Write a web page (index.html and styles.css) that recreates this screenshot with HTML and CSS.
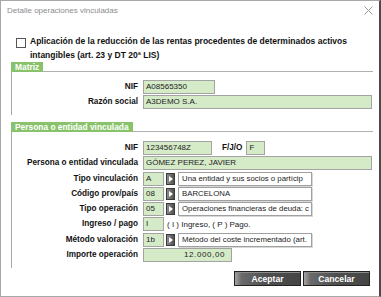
FILE: index.html
```
<!DOCTYPE html>
<html lang="es">
<head>
    <meta charset="UTF-8">
    <title>Detalle operaciones vinculadas</title>
    <link rel="stylesheet" href="styles.css">
</head>
<body>
    <div class="dialog">
        <div class="titlebar">
            <span class="title">Detalle operaciones vinculadas</span>
            <svg class="close" width="9" height="9" viewBox="0 0 9 9"><path d="M0.5 0.5 L8.5 8.5 M8.5 0.5 L0.5 8.5" stroke="#9a9a9a" stroke-width="1" fill="none"/></svg>
        </div>

        <div class="check">
            <span class="box"></span>
            <span class="check-text">Aplicación de la reducción de las rentas procedentes de determinados activos<br>intangibles (art. 23 y DT 20ª LIS)</span>
        </div>

        <div class="group">
            <div class="group-head"><span class="tab">Matriz</span><span class="rule"></span></div>
            <div class="group-body form">
                <span class="lbl">NIF</span>
                <div class="cell"><span class="field w-nif">A08565350</span></div>
                <span class="lbl">Razón social</span>
                <div class="cell"><span class="field w-full">A3DEMO S.A.</span></div>
            </div>
        </div>

        <div class="group second">
            <div class="group-head"><span class="tab">Persona o entidad vinculada</span><span class="rule"></span></div>
            <div class="group-body form">
                <span class="lbl">NIF</span>
                <div class="cell">
                    <span class="field w-nif2">123456748Z</span>
                    <span class="lbl inline">F/J/O</span>
                    <span class="field w-fjo">F</span>
                </div>
                <span class="lbl">Persona o entidad vinculada</span>
                <div class="cell"><span class="field w-full">GÓMEZ PEREZ, JAVIER</span></div>
                <span class="lbl">Tipo vinculación</span>
                <div class="cell"><span class="field w-code">A</span><span class="pick"></span><span class="desc">Una entidad y sus socios o partícip</span></div>
                <span class="lbl">Código prov/país</span>
                <div class="cell"><span class="field w-code">08</span><span class="pick"></span><span class="desc">BARCELONA</span></div>
                <span class="lbl">Tipo operación</span>
                <div class="cell"><span class="field w-code">05</span><span class="pick"></span><span class="desc">Operaciones financieras de deuda: c</span></div>
                <span class="lbl">Ingreso / pago</span>
                <div class="cell"><span class="field w-code">I</span><span class="hint">( I ) Ingreso, ( P ) Pago.</span></div>
                <span class="lbl">Método valoración</span>
                <div class="cell"><span class="field w-code">1b</span><span class="pick"></span><span class="desc">Método del coste incrementado (art.</span></div>
                <span class="lbl">Importe operación</span>
                <div class="cell"><span class="field w-amount">12.000,00</span></div>
            </div>
        </div>

        <div class="actions">
            <button class="btn">Aceptar</button>
            <button class="btn">Cancelar</button>
        </div>
    </div>
</body>
</html>
```

FILE: styles.css
```
body {
    margin: 0;
    font-family: "Liberation Sans", Arial, sans-serif;
    background: #fff;
}

.dialog {
    width: 381px;
    height: 297px;
    box-sizing: border-box;
    border: 1px solid #a8a8a8;
    border-right: 2px solid #4a4a4a;
    background: #fff;
}

.titlebar {
    height: 19px;
    display: flex;
    align-items: center;
    justify-content: space-between;
    padding: 0 6px 0 6px;
}

.title {
    font-size: 8px;
    color: #8c8c8c;
    margin-top: -1px;
}

.close {
    margin-top: -1px;
}

.check {
    display: flex;
    align-items: flex-start;
    margin: 14px 0 0 15px;
    height: 28px;
}

.box {
    width: 8px;
    height: 8px;
    border: 1px solid #555;
    background: #fff;
    margin-top: 4px;
    flex: none;
}

.check-text {
    margin-left: 4px;
    font-size: 8.5px;
    font-weight: bold;
    line-height: 14px;
    color: #111;
}

.group {
    margin-left: 10px;
    width: 362px;
}

.group.second {
    margin-top: 7px;
}

.group-head {
    display: flex;
    height: 10px;
}

.tab {
    background: #88c36b;
    color: #fff;
    font-size: 8.4px;
    font-weight: bold;
    line-height: 10px;
    padding: 0 4px;
}

.rule {
    flex: 1;
    border-bottom: 1px solid #b0b0b0;
}

.group-body {
    border-left: 1px solid #a8a8a8;
    padding: 8px 0 6px 0;
}

.second .group-body {
    padding: 9px 0 6px 0;
}

.form {
    display: grid;
    grid-template-columns: 126px 1fr;
    column-gap: 5px;
    row-gap: 1px;
    grid-auto-rows: 14px;
}

.second .form {
    row-gap: 1.3px;
}

.lbl {
    font-size: 8.2px;
    font-weight: bold;
    color: #111;
    text-align: right;
    line-height: 14px;
}

.lbl.inline {
    margin: 0 4px 0 10px;
}

.cell {
    display: flex;
    align-items: center;
}

.field {
    height: 14px;
    box-sizing: border-box;
    background: #d5ebc8;
    border: 1px solid #a3a3a3;
    font-size: 8px;
    line-height: 12px;
    padding: 0 2px;
    color: #222;
    white-space: nowrap;
    overflow: hidden;
}

.w-nif { width: 72px; }
.w-nif2 { width: 69px; }
.w-fjo { width: 19px; }
.w-full { width: 229px; }
.w-code { width: 21px; }

.w-amount {
    width: 89px;
    text-align: right;
    padding-right: 6px;
    letter-spacing: 0.6px;
}

.pick {
    width: 9px;
    height: 12px;
    margin: 0 3px 0 2px;
    background: linear-gradient(to right, #8a8a8a, #505050);
    border: 1px solid #3a3a3a;
    box-sizing: border-box;
    position: relative;
}

.pick::after {
    content: "";
    position: absolute;
    left: 2px;
    top: 2px;
    border-left: 4px solid #fff;
    border-top: 3px solid transparent;
    border-bottom: 3px solid transparent;
}

.desc {
    width: 134px;
    height: 14px;
    box-sizing: border-box;
    border: 1px solid #a0a0a0;
    box-shadow: 1px 1px 0 #d8d8d8;
    background: #fff;
    font-size: 7.8px;
    line-height: 12px;
    padding: 0 2px 0 3px;
    color: #222;
    white-space: nowrap;
    overflow: hidden;
}

.hint {
    font-size: 8px;
    color: #222;
    margin-left: 3px;
}

.actions {
    display: flex;
    justify-content: flex-end;
    gap: 2px;
    margin: 3px 9px 0 0;
}

.btn {
    width: 67px;
    height: 15px;
    padding: 0;
    border: 1px solid #222;
    background: linear-gradient(to right, #a4a4a4 0, #6a6a6a 10%, #4e4e4e 50%, #454545 100%);
    box-shadow: inset 0 1px 0 #8c8c8c;
    color: #fff;
    font-family: "Liberation Sans", Arial, sans-serif;
    font-size: 8.6px;
    font-weight: bold;
    cursor: pointer;
}
```
